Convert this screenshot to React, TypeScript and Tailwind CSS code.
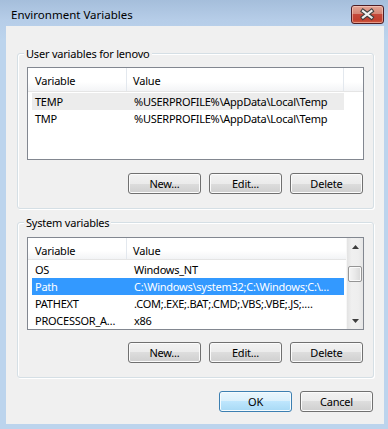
import React from "react";

const font = "font-['Noto_Sans',sans-serif]";

function Btn({ label, def }: { label: string; def?: boolean }) {
  return (
    <div
      className={
        def
          ? "w-[73px] h-[21px] rounded-[3px] border border-[#3c7fb1] bg-[linear-gradient(#eaf6fd,#d9f0fc_50%,#bee6fd_50%,#a7d9f5)] shadow-[inset_0_0_0_1px_#f4fbfe] flex items-center justify-center text-[11px] leading-[15px] tracking-[-0.2px] text-black"
          : "w-[73px] h-[21px] rounded-[3px] border border-[#707070] bg-[linear-gradient(#f2f2f2,#ebebeb_50%,#dddddd_50%,#cfcfcf)] shadow-[inset_0_0_0_1px_#fbfbfb] flex items-center justify-center text-[11px] leading-[15px] tracking-[-0.2px] text-black"
      }
    >
      {label}
    </div>
  );
}

function Header() {
  return (
    <div className="h-[24px] flex bg-[linear-gradient(#ffffff,#ffffff_60%,#f3f4f6)] border-b border-[#e5e5e5] text-[11px] leading-[15px] tracking-[-0.2px] text-black">
      <div className="w-[99px] pl-[7px] pt-[5px] border-r border-[#e3e8ee]">Variable</div>
      <div className="w-[217px] pl-[6px] pt-[5px] border-r border-[#e3e8ee]">Value</div>
      <div className="flex-1" />
    </div>
  );
}

type Row = { name: string; value: string; state?: "sel" | "gray" };

function Rows({ rows }: { rows: Row[] }) {
  return (
    <div className="pt-[1px] flex flex-col">
      {rows.map((r) => (
        <div
          key={r.name}
          className={
            r.state === "sel"
              ? "ml-[4px] w-[312px] h-[17px] flex bg-[#3399ff] text-white text-[11px] leading-[17px] tracking-[-0.25px] whitespace-nowrap overflow-hidden"
              : r.state === "gray"
              ? "ml-[4px] w-[312px] h-[17px] flex bg-[#ececec] text-black text-[11px] leading-[17px] tracking-[-0.25px] whitespace-nowrap overflow-hidden"
              : "ml-[4px] w-[312px] h-[17px] flex text-black text-[11px] leading-[17px] tracking-[-0.25px] whitespace-nowrap overflow-hidden"
          }
        >
          <div className="w-[95px] pl-[3px] overflow-hidden">{r.name}</div>
          <div className="flex-1 pl-[7px] overflow-hidden">{r.value}</div>
        </div>
      ))}
    </div>
  );
}

function ScrollBar() {
  return (
    <div className="w-[17px] flex flex-col bg-[linear-gradient(90deg,#e3e3e3,#f0f0f0_30%,#eeeeee_70%,#e6e6e6)] border-l border-[#f7f7f7]">
      <div className="h-[17px] flex items-center justify-center">
        <svg width="7" height="4" viewBox="0 0 7 4">
          <path d="M3.5 0 L7 4 L0 4 Z" fill="#3d3d3d" />
        </svg>
      </div>
      <div className="mt-[11px] mx-[1px] h-[16px] rounded-[2px] border border-[#959595] bg-[linear-gradient(90deg,#f5f5f5,#e9e9e9_50%,#d8d8d8)] shadow-[inset_0_0_0_1px_#fafafa]" />
      <div className="flex-1" />
      <div className="h-[17px] flex items-center justify-center">
        <svg width="7" height="4" viewBox="0 0 7 4">
          <path d="M0 0 L7 0 L3.5 4 Z" fill="#3d3d3d" />
        </svg>
      </div>
    </div>
  );
}

function Group({
  label,
  children,
  pt,
}: {
  label: string;
  children: React.ReactNode;
  pt: "a" | "b";
}) {
  return (
    <div
      className={
        pt === "a"
          ? "relative h-[156px] rounded-[3px] border border-[#d5dfe5] shadow-[inset_1px_1px_0_#ffffff,1px_1px_0_#ffffff] px-[9px] pt-[13px] flex flex-col"
          : "relative h-[156px] rounded-[3px] border border-[#d5dfe5] shadow-[inset_1px_1px_0_#ffffff,1px_1px_0_#ffffff] px-[9px] pt-[14px] flex flex-col"
      }
    >
      <div className="absolute left-[6px] -top-[8px] px-[2px] bg-[#f0f0f0] text-[11px] leading-[15px] tracking-[-0.2px] text-black">
        {label}
      </div>
      {children}
    </div>
  );
}

export default function App() {
  return (
    <div
      className={`${font} w-[388px] h-[429px] flex flex-col bg-[linear-gradient(#a5bedb,#b6cde8_20px,#bcd4ed_40px,#bcd4ed)] overflow-hidden`}
    >
      <div className="h-[26px] flex items-start justify-between pl-[11px] pr-[4px]">
        <div className="pt-[7px] text-[11.5px] leading-[15px] text-black">Environment Variables</div>
        <div className="mt-[5px] w-[33px] h-[19px] rounded-[3px] border border-[#4e1d24] bg-[linear-gradient(#e4a595,#d48676_45%,#c4483a_50%,#c2402f_80%,#cf5a40)] shadow-[inset_0_0_0_1px_rgba(255,220,210,0.5)] flex items-center justify-center">
          <svg width="31" height="17" viewBox="0 0 31 17">
            <path d="M11 5 L19.5 11.5 M19.5 5 L11 11.5" stroke="#3f3f3f" strokeWidth="4.2" strokeLinecap="square" />
            <path d="M11 5 L19.5 11.5 M19.5 5 L11 11.5" stroke="#f2f2f2" strokeWidth="2.2" strokeLinecap="square" />
          </svg>
        </div>
      </div>
      <div className="ml-[6px] mr-[4px] mb-[5px] flex-1 bg-[#f0f0f0] pl-[11px] pr-[10px] pt-[27px] flex flex-col">
        <Group label="User variables for lenovo" pt="a">
          <div className="h-[93px] border border-[#828790] bg-white flex flex-col">
            <Header />
            <Rows
              rows={[
                { name: "TEMP", value: "%USERPROFILE%\\AppData\\Local\\Temp", state: "gray" },
                { name: "TMP", value: "%USERPROFILE%\\AppData\\Local\\Temp" },
              ]}
            />
          </div>
          <div className="mt-[13px] flex justify-end gap-[8px] pr-[1px]">
            <Btn label="New..." />
            <Btn label="Edit..." />
            <Btn label="Delete" />
          </div>
        </Group>
        <div className="mt-[13px]">
          <Group label="System variables" pt="b">
            <div className="h-[93px] border border-[#828790] bg-white flex">
              <div className="flex-1 flex flex-col overflow-hidden">
                <div className="h-[24px] flex bg-[linear-gradient(#ffffff,#ffffff_60%,#f3f4f6)] border-b border-[#e5e5e5] text-[11px] leading-[15px] tracking-[-0.2px] text-black">
                  <div className="w-[99px] pl-[7px] pt-[5px] border-r border-[#e3e8ee]">Variable</div>
                  <div className="flex-1 pl-[6px] pt-[5px]">Value</div>
                </div>
                <Rows
                  rows={[
                    { name: "OS", value: "Windows_NT" },
                    { name: "Path", value: "C:\\Windows\\system32;C:\\Windows;C:\\…", state: "sel" },
                    { name: "PATHEXT", value: ".COM;.EXE;.BAT;.CMD;.VBS;.VBE;.JS;.…" },
                    { name: "PROCESSOR_A…", value: "x86" },
                  ]}
                />
              </div>
              <ScrollBar />
            </div>
            <div className="mt-[12px] flex justify-end gap-[8px] pr-[1px]">
              <Btn label="New..." />
              <Btn label="Edit..." />
              <Btn label="Delete" />
            </div>
          </Group>
        </div>
        <div className="mt-[13px] flex justify-end gap-[8px] pr-[1px]">
          <Btn label="OK" def />
          <Btn label="Cancel" />
        </div>
      </div>
    </div>
  );
}
